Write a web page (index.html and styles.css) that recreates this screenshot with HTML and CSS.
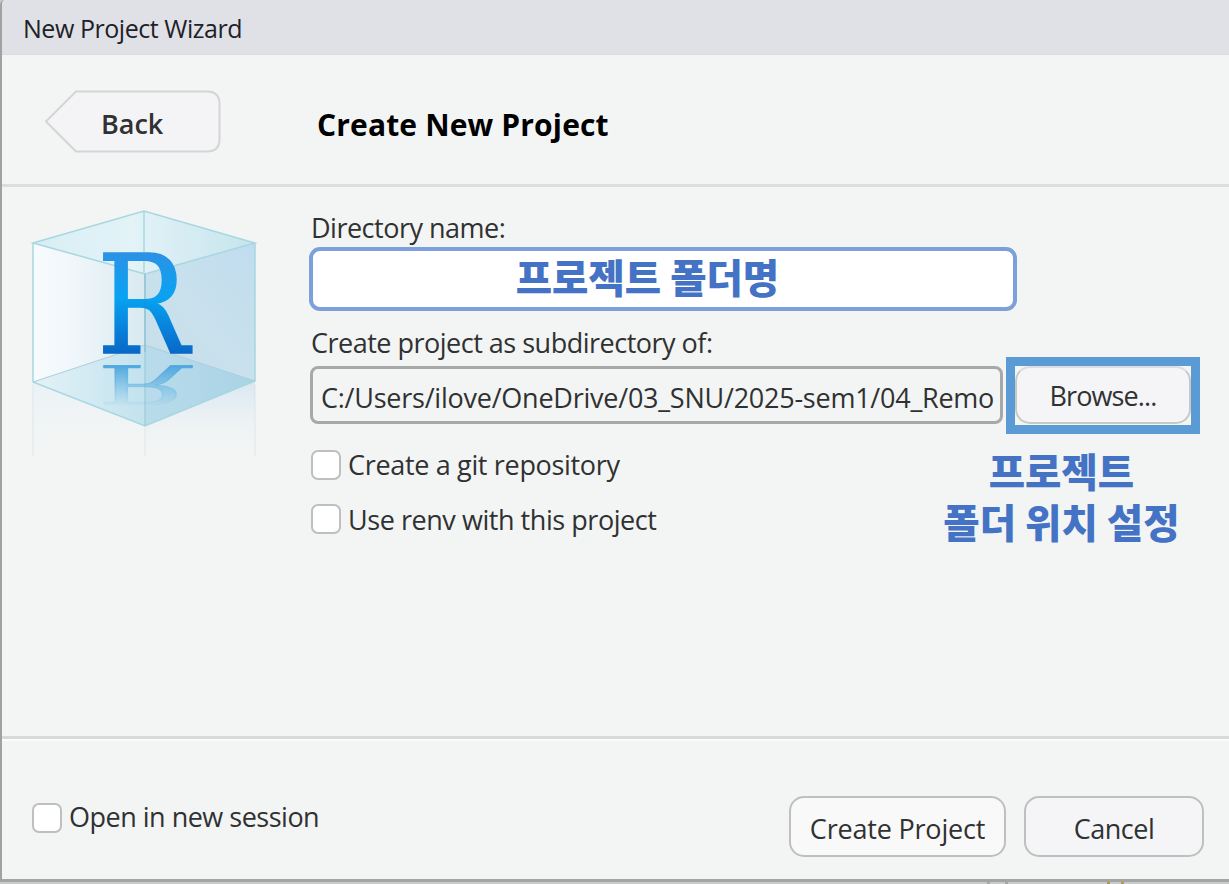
FILE: index.html
```html
<!DOCTYPE html>
<html lang="en">
<head>
<meta charset="utf-8">
<title>New Project Wizard</title>
<link rel="stylesheet" href="styles.css">
</head>
<body>
<div class="dialog">
  <div class="titlebar"><span class="t-title">New Project Wizard</span></div>
  <div class="header">
    <div class="back">
      <svg class="back-shape" width="176" height="63" viewBox="0 0 176 63"><path d="M31 1.5H162Q174.500 1.500 174.500 14V49Q174.500 61.500 162 61.500H31L1 31.500Z" fill="#f4f4f7" stroke="#d3d5d5" stroke-width="2"/></svg>
      <span class="t-back">Back</span>
    </div>
    <h1 class="t-heading">Create New Project</h1>
  </div>
  <div class="main">
    <svg class="cube" width="250" height="290" viewBox="10 195 250 290">
      <defs>
        <linearGradient id="left" x1="0" x2="1"><stop offset="0" stop-color="#f8fbfd"/><stop offset=".2" stop-color="#eff6fa"/><stop offset=".5" stop-color="#d8eaf0"/></linearGradient>
        <linearGradient id="right" x1="0" x2="1" y1="1" y2="0"><stop offset="0" stop-color="#c6dfea"/><stop offset=".5" stop-color="#c9e1ed"/><stop offset="1" stop-color="#c0dcef"/></linearGradient>
        <linearGradient id="top" x1="0" x2="1"><stop offset="0" stop-color="#d8eef4"/><stop offset=".45" stop-color="#e3f3f8"/><stop offset="1" stop-color="#c5e4ec"/></linearGradient>
        <linearGradient id="floorL" x1="0" x2="1"><stop offset="0" stop-color="#e3f2f7"/><stop offset="1" stop-color="#c2e2ee"/></linearGradient>
        <linearGradient id="floorR" x1="0" x2="1"><stop offset="0" stop-color="#b9dceb"/><stop offset="1" stop-color="#a9d3e6"/></linearGradient>
        <linearGradient id="fadeL" x1="0" x2="0" y1="0" y2="1"><stop offset="0" stop-color="#eaf1f6"/><stop offset="1" stop-color="#f3f5f5" stop-opacity="0"/></linearGradient>
        <linearGradient id="fadeR" x1="0" x2="0" y1="0" y2="1"><stop offset="0" stop-color="#d9e7f2"/><stop offset="1" stop-color="#f3f5f5" stop-opacity="0"/></linearGradient>
        <linearGradient id="ink" gradientUnits="userSpaceOnUse" x1="0" x2="0" y1="-101" y2="0"><stop offset="0" stop-color="#2d91e5"/><stop offset=".45" stop-color="#08a3f2"/><stop offset="1" stop-color="#0868c8"/></linearGradient>
        <linearGradient id="mirror" gradientUnits="userSpaceOnUse" x1="0" x2="0" y1="-101" y2="0"><stop offset="0" stop-color="#62b5e2" stop-opacity="0.05"/><stop offset="1" stop-color="#4ba5df"/></linearGradient>
      </defs>
      <path d="M33 382L145 426V462H33Z" fill="url(#fadeL)"/>
      <path d="M255 381L145 426V462H255Z" fill="url(#fadeR)"/>
      <path d="M33 243L144 211L255 243L255 381L145 345L33 382Z" fill="url(#left)"/>
      <path d="M146 274L255 243V381L146 345Z" fill="url(#right)"/>
      <path d="M33 382L145 345V426Z" fill="url(#floorL)"/>
      <path d="M145 345L255 381L145 426Z" fill="url(#floorR)"/>
      <path d="M33 243L144 211L255 243L145 274Z" fill="url(#top)"/>
      <g fill="none" stroke="#a7d7df" stroke-width="1.500">
        <path d="M33 243L144 211L255 243L145 274ZM33 243V382L145 426L255 381V243M144 211V274"/>
        <path d="M145 274V426" stroke="#a2cfda"/>
        <path d="M33 382L145 345L255 381" stroke="#aacfda" stroke-width="1"/>
        <path d="M33 384V456M255 384V456M145 428V456" stroke="#cadce5" stroke-opacity=".35"/>
      </g>
      <text class="logo" transform="translate(97 352.500)" fill="url(#ink)" stroke="url(#ink)" stroke-width="1.500" textLength="92" lengthAdjust="spacingAndGlyphs">R</text>
      <text class="logo" transform="translate(97 364.500) scale(1 -.4)" fill="url(#mirror)" stroke="url(#mirror)" stroke-width="1.500" textLength="92" lengthAdjust="spacingAndGlyphs">R</text>
      <path d="M145 274V352" stroke="#2d7fb5" stroke-opacity=".3"/>
    </svg>
    <div class="form">
      <label class="t-dir">Directory name:</label>
      <div class="name-field"><span class="ko">프로젝트 폴더명</span></div>
      <label class="t-sub">Create project as subdirectory of:</label>
      <div class="path-row">
        <div class="path-field"><span class="t-path">C:/Users/ilove/OneDrive/03_SNU/2025-sem1/04_Remo</span></div>
        <div class="highlight"><div class="browse"><span class="t-browse">Browse...</span></div></div>
      </div>
      <div class="lower">
        <div class="checks">
          <div class="check"><i class="box"></i><span class="t-git">Create a git repository</span></div>
          <div class="check"><i class="box"></i><span class="t-renv">Use renv with this project</span></div>
        </div>
        <div class="note ko">프로젝트<br>폴더 위치 설정</div>
      </div>
    </div>
  </div>
  <div class="footer">
    <div class="check session"><i class="box"></i><span class="t-open">Open in new session</span></div>
    <div class="button create"><span class="t-create">Create Project</span></div>
    <div class="button cancel"><span class="t-cancel">Cancel</span></div>
  </div>
</div>
<div class="behind"><i class="gray"></i><i class="gray"></i><i class="gold"></i><i class="gold"></i></div>
</body>
</html>
```
FILE: styles.css
```css
* { box-sizing: border-box; }
body {
  margin: 0;
  width: 1229px;
  height: 884px;
  overflow: hidden;
  background: #c9cbcb;
  font-family: "Open Sans", "Noto Sans CJK KR", sans-serif;
  font-size: 27px;
  line-height: 36px;
  color: #303132;
  white-space: nowrap;
}
.dialog {
  height: 882px;
  border-left: 2px solid #a0a1a1;
  border-bottom: 3px solid #a3a5a5;
  border-top-left-radius: 5px;
  background: #f3f5f4;
}
.behind { display: flex; height: 2px; padding-left: 987px; }
.behind i { width: 3px; height: 2px; }
.gray { margin-right: 15px; background: #a5a6a7; }
.gold { background: #a99d55; }
.gold:nth-child(3) { margin: 0 11px 0 84px; }
.titlebar {
  height: 55px;
  padding: 10px 0 0 21px;
  background: #e0e1e6;
  border-bottom: 1px solid #d9dbdf;
  border-top-left-radius: 5px;
  color: #202126;
}
.t-title { font-size: 25px; letter-spacing: -.45px; }
.header {
  display: flex;
  height: 132px;
  padding: 35px 0 0 43px;
  border-bottom: 3px solid #dcdedd;
}
.back {
  display: grid;
  width: 176px;
  height: 63px;
}
.back-shape, .t-back { grid-area: 1 / 1; }
.t-back { padding: 16px 0 0 56px; font-weight: 600; }
.t-heading {
  margin: 17px 0 0 96px;
  font-size: 30px;
  font-weight: 700;
  line-height: 36px;
  color: #000;
  letter-spacing: .15px;
}
.main {
  display: flex;
  height: 549px;
  padding-top: 8px;
}
.cube { margin-left: 8px; flex: none; }
.logo { font-family: "DejaVu Serif", serif; font-size: 137px; }
.form {
  display: flex;
  flex-direction: column;
  width: 920px;
  margin: 15px 0 0 49px;
}
.form label { height: 36px; padding-left: 2px; letter-spacing: -.5px; }
.name-field {
  width: 708px;
  height: 64px;
  margin-top: 1px;
  padding: 3px 31px 0 0;
  border: 4px solid #7d9fdb;
  border-radius: 11px;
  background: #fff;
  text-align: center;
}
.ko {
  font-family: "Noto Sans CJK KR", sans-serif;
  font-size: 39.5px;
  font-weight: 900;
  line-height: 51px;
  color: #4472c4;
}
.name-field .ko { display: block; line-height: 44px; }
.t-sub { margin-top: 14px; }
.path-row { display: flex; height: 78px; margin-left: 1px; margin-top: -5px; }
.path-field {
  width: 693px;
  height: 58px;
  margin-top: 10px;
  padding: 11px 0 0 8px;
  border: 3px solid #a7a8a8;
  border-radius: 8px;
}
.t-path { display: block; letter-spacing: -.24px; }
.highlight {
  width: 194px;
  height: 77px;
  margin: 1px 0 0 3px;
  border: 9px solid #5b9bd5;
  background: #f3f5f4;
}
.browse {
  height: 58px;
  padding-top: 10px;
  border: 2px solid #c8c8c9;
  border-top-color: #dddddf;
  border-radius: 15px;
  background: #f5f5f8;
  text-align: center;
}
.t-browse { letter-spacing: -.9px; }
.lower { display: flex; }
.checks { width: 580px; padding: 12px 0 0 2px; }
.check { display: flex; gap: 7px; height: 54px; }
.box {
  width: 30px;
  height: 30px;
  margin-top: 4px;
  border: 2px solid #bebfbf;
  border-radius: 7px;
  background: #fff;
}
.t-git { padding-top: 1px; letter-spacing: -.33px; }
.t-renv { padding-top: 2px; letter-spacing: -.45px; }
.note { width: 343px; padding: 10px 0 0 0; margin-left: 18px; text-align: center; }
.footer {
  display: flex;
  height: 143px;
  padding: 57px 0 0 30px;
  border-top: 3px solid #d8dad9;
  box-shadow: inset 0 2px #fbfcfc;
}
.session { width: 757px; padding-top: 3px; }
.button {
  height: 61px;
  padding-top: 13px;
  border: 2px solid #bebfbf;
  border-radius: 15px;
  text-align: center;
}
.create { width: 217px; background: #f9f9f9; }
.cancel { width: 180px; margin-left: 18px; background: #f5f5f8; }
.t-open, .t-cancel { letter-spacing: -.5px; }
.t-create { letter-spacing: -.2px; }
```
